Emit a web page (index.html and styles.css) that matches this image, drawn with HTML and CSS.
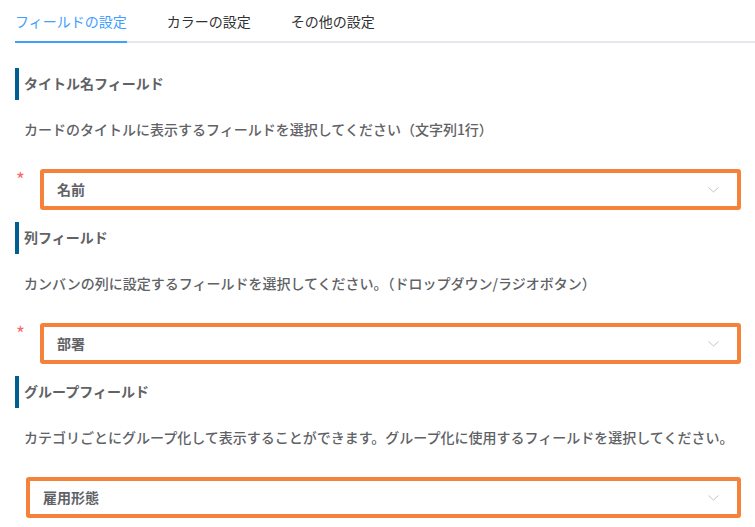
FILE: index.html
```html
<!DOCTYPE html>
<html lang="ja">
<head>
<meta charset="utf-8">
<link rel="stylesheet" href="styles.css">
</head>
<body>
<div class="tabs">
  <div class="tab active">フィールドの設定</div>
  <div class="tab">カラーの設定</div>
  <div class="tab">その他の設定</div>
</div>
<div class="content">
  <section class="sect">
    <h2 class="sect-title">タイトル名フィールド</h2>
    <p class="desc">カードのタイトルに表示するフィールドを選択してください（文字列1行）</p>
    <div class="row required">
      <span class="star">*</span>
      <div class="select"><span class="val">名前</span><svg class="chev" width="11" height="6" viewBox="0 0 11 6"><path d="M0.5 0.5 L5.5 5 L10.5 0.5" fill="none" stroke="#c0c4cc" stroke-width="1"/></svg></div>
    </div>
  </section>
  <section class="sect">
    <h2 class="sect-title">列フィールド</h2>
    <p class="desc">カンバンの列に設定するフィールドを選択してください。（ドロップダウン/ラジオボタン）</p>
    <div class="row required">
      <span class="star">*</span>
      <div class="select"><span class="val">部署</span><svg class="chev" width="11" height="6" viewBox="0 0 11 6"><path d="M0.5 0.5 L5.5 5 L10.5 0.5" fill="none" stroke="#c0c4cc" stroke-width="1"/></svg></div>
    </div>
  </section>
  <section class="sect">
    <h2 class="sect-title">グループフィールド</h2>
    <p class="desc">カテゴリごとにグループ化して表示することができます。グループ化に使用するフィールドを選択してください。</p>
    <div class="row optional">
      <div class="select"><span class="val">雇用形態</span><svg class="chev" width="11" height="6" viewBox="0 0 11 6"><path d="M0.5 0.5 L5.5 5 L10.5 0.5" fill="none" stroke="#c0c4cc" stroke-width="1"/></svg></div>
    </div>
  </section>
</div>
</body>
</html>
```
FILE: styles.css
```css
* { box-sizing: border-box; }
html, body { margin: 0; padding: 0; background: #fff; }
body {
  width: 755px;
  font-family: "Noto Sans CJK JP", "Noto Sans", sans-serif;
  font-size: 14px;
  color: #606266;
}
.tabs {
  display: flex;
  gap: 40px;
  margin-left: 15px;
  height: 43px;
  border-bottom: 2px solid #e4e7ed;
}
.tab {
  height: 41px;
  line-height: 42px;
  color: #303133;
  font-size: 14px;
}
.tab.active {
  color: #409eff;
  border-bottom: 2px solid #409eff;
  height: 43px;
}
.content {
  padding: 25px 14px 0 15px;
}
.sect { margin-bottom: 12px; }
.sect-title {
  margin: 0;
  height: 32px;
  line-height: 30px;
  border-left: 4px solid #005f91;
  padding-left: 5px;
  font-size: 14px;
  font-weight: bold;
  color: #606266;
}
.desc {
  margin: 19px 0 0 9px;
  line-height: 20px;
  font-weight: 500;
}
.row {
  display: flex;
  align-items: flex-start;
  margin-top: 30px;
}
.star {
  width: 25px;
  color: #f56c6c;
  font-size: 19px;
  line-height: 18px;
  padding-left: 1px;
  margin-top: 1px;
}
.optional { padding-left: 11px; }
.select {
  flex: 1;
  height: 41px;
  border: 4px solid #f5823a;
  border-radius: 3px;
  display: flex;
  align-items: center;
  justify-content: space-between;
  padding: 0 18px 0 13px;
}
.val {
  font-weight: bold;
  color: #606266;
  margin-top: -2px;
}
.chev { display: block; }
```
